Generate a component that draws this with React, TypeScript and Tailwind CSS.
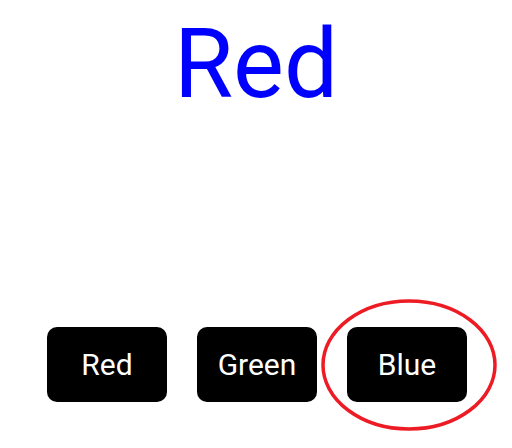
import React, { useState } from 'react';

const colors = ['Red', 'Green', 'Blue'];

const App: React.FC = () => {
  const [color] = useState('Red');

  return (
    <div className="w-[512px] h-[448px] bg-white flex flex-col items-center font-['Roboto',sans-serif]">
      <h1 className="mt-[8px] text-[96px] leading-[112px] text-[#0000ff]">{color}</h1>
      <div className="relative mt-[207px] ml-[2px] flex gap-[30px]">
        {colors.map((c) => (
          <button
            key={c}
            className="w-[120px] h-[75px] rounded-[10px] bg-black text-white text-[30px]"
          >
            {c}
          </button>
        ))}
        {/* annotation round the last button */}
        <svg
          className="absolute left-[274px] top-[-28px] pointer-events-none"
          width="176"
          height="132"
          viewBox="0 0 176 132"
        >
          <ellipse cx="88" cy="66" rx="86" ry="64" fill="none" stroke="#ed1c24" strokeWidth="3.5" />
        </svg>
      </div>
    </div>
  );
};

export default App;
